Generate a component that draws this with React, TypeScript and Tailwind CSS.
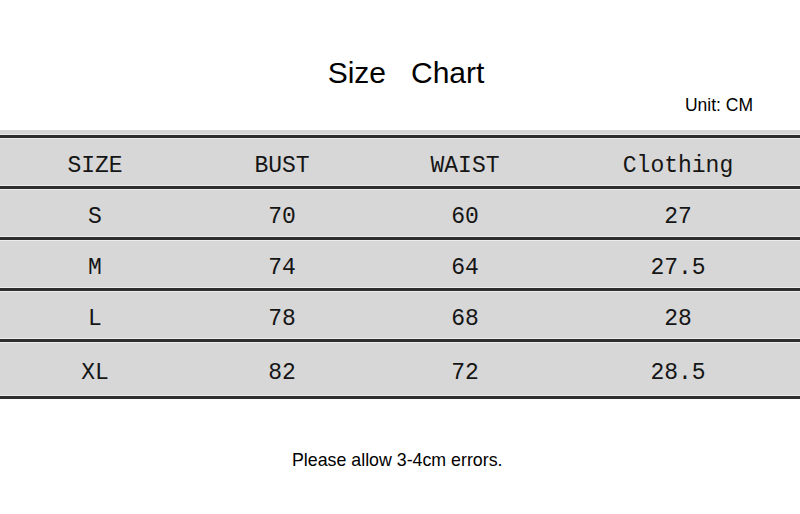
import React from 'react';

const header = ['SIZE', 'BUST', 'WAIST', 'Clothing'];

const rows = [
  ['S', '70', '60', '27'],
  ['M', '74', '64', '27.5'],
  ['L', '78', '68', '28'],
  ['XL', '82', '72', '28.5'],
];

const cols = ['w-[190px]', 'w-[184px]', 'w-[182px]', 'flex-1'];

function Row({ cells, tall }: { cells: string[]; tall?: boolean }) {
  return (
    <div
      className={`flex items-center pt-[8px] border-t-[3px] border-[#2e2e2e] shadow-[0_-1px_0_#ececec,inset_0_1px_0_#ececec] ${tall ? 'h-[57px]' : 'h-[51px]'}`}
    >
      {cells.map((c, i) => (
        <div key={i} className={`${cols[i]} text-center`}>
          {c}
        </div>
      ))}
    </div>
  );
}

export default function App() {
  return (
    <div className="w-[800px] h-[514px] bg-white overflow-hidden">
      {/* Title */}
      <div className="pt-[56px] pl-[12px] text-center text-[30px] leading-[34px] text-black whitespace-pre font-['Liberation_Sans',Arial,sans-serif]">
        Size   Chart
      </div>
      <div className="mt-[4px] pr-[47px] text-right text-[17.5px] leading-[22px] text-black font-['Liberation_Sans',Arial,sans-serif]">
        Unit: CM
      </div>

      {/* Table */}
      <div className="mt-[14px] bg-[#d7d7d7] pt-[5px] text-[23px] text-[#151515] font-['Liberation_Mono','Courier_New',monospace]">
        <Row cells={header} />
        {rows.map((r, i) => (
          <Row key={i} cells={r} tall={i === rows.length - 1} />
        ))}
        <div className="border-t-[3px] border-[#2e2e2e] shadow-[0_-1px_0_#ececec] h-[3px] bg-[#e4e4e4]" />
      </div>

      {/* Note */}
      <div className="mt-[50px] pl-[292px] text-[17.8px] leading-[22px] text-black font-['Liberation_Sans',Arial,sans-serif]">
        Please allow 3-4cm errors.
      </div>
    </div>
  );
}
